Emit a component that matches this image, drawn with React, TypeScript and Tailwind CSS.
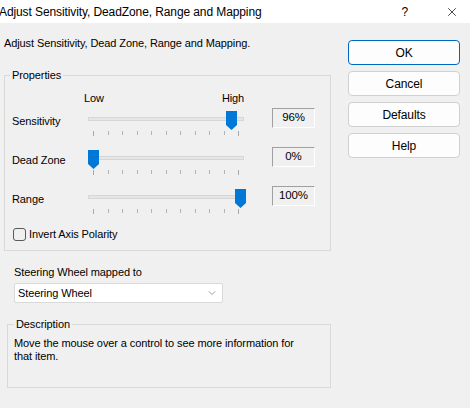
import { ChevronDown, X } from "lucide-react";

type SliderRowProps = {
	label: string;
	value: string;
	thumbLeft: number;
};

const TICKS = [0, 1, 2, 3, 4, 5, 6, 7, 8, 9, 10];

function Thumb() {
	return (
		<svg width="11" height="19" viewBox="0 0 11 19">
			<polygon points="0,0 11,0 11,14 5.5,19 0,14" fill="#0078d7" />
		</svg>
	);
}

function SliderRow({ label, value, thumbLeft }: SliderRowProps) {
	return (
		<div className="flex h-[39px] items-start">
			<div className="w-[83px] pl-[7px] mt-[6px] leading-[15px]">{label}</div>
			<div className="relative w-[156px] h-[39px]">
				<div className="mt-[9px] h-[4px] w-full border border-[#d6d6d6] bg-[#e6e6e6]" />
				<div className="mt-[10px] flex justify-between px-[5px]">
					{TICKS.map(t => (
						<div
							key={t}
							className={
								t === 0 || t === 10
									? "w-px h-[5px] bg-[#a8a8a8]"
									: "w-px h-[4px] bg-[#b4b4b4]"
							}
						/>
					))}
				</div>
				<div className="absolute top-[3px]" style={{ left: thumbLeft }}>
					<Thumb />
				</div>
			</div>
			<div className="ml-[28px] w-[43px] h-[20px] flex items-center justify-center text-[11.5px] border-t border-l border-[#a0a0a0] border-b-white border-r-white border-b border-r">
				{value}
			</div>
		</div>
	);
}

function DialogButton({ label, primary }: { label: string; primary?: boolean }) {
	return (
		<button
			className={
				primary
					? "w-[112px] h-[25px] rounded-[4px] bg-[#fdfdfd] border border-[#0067c0] text-[12px] leading-none"
					: "w-[112px] h-[25px] rounded-[4px] bg-[#fdfdfd] border border-[#d0d0d0] text-[12px] leading-none"
			}
		>
			{label}
		</button>
	);
}

export default function App() {
	return (
		<div className="w-[470px] h-[408px] overflow-hidden bg-[#f0f0f0] text-black text-[11px] tracking-[-0.1px] font-['Segoe_UI','Liberation_Sans',sans-serif]">
			{/* title bar */}
			<div className="h-[23px] bg-white flex items-center">
				<span className="-ml-[1px] text-[12px]">
					Adjust Sensitivity, DeadZone, Range and Mapping
				</span>
				<span className="ml-auto mr-[37px] text-[12px]">?</span>
				<X size={14} strokeWidth={1.2} className="mr-[11px]" />
			</div>

			<div className="flex">
				{/* left column */}
				<div className="w-[336px]">
					<p className="pl-[4px] pt-[13px] leading-[15px]">
						Adjust Sensitivity, Dead Zone, Range and Mapping.
					</p>

					<fieldset className="ml-[4px] mt-[17px] w-[327px] border border-[#d9d9d9] pb-[8px]">
						<legend className="ml-[5px] px-[2px] leading-[14px]">Properties</legend>
						<div className="flex pt-[9px] leading-[15px]">
							<span className="ml-[79px]">Low</span>
							<span className="ml-[118px]">High</span>
						</div>
						<div className="mt-[2px]">
							<SliderRow label="Sensitivity" value="96%" thumbLeft={138} />
							<SliderRow label="Dead Zone" value="0%" thumbLeft={0} />
							<SliderRow label="Range" value="100%" thumbLeft={147} />
						</div>
						<label className="mt-[2px] flex items-center pl-[8px] leading-[15px]">
							<span className="w-[13px] h-[13px] rounded-[3px] border border-[#5a5a5a]" />
							<span className="ml-[3px]">Invert Axis Polarity</span>
						</label>
					</fieldset>

					<div className="mt-[14px] pl-[14px] leading-[15px]">Steering Wheel mapped to</div>
					<div className="ml-[14px] mt-[3px] w-[209px] h-[20px] bg-white border border-[#d9d9d9] rounded-[2px] flex items-center pl-[3px] pr-[4px]">
						<span>Steering Wheel</span>
						<ChevronDown size={12} strokeWidth={1.2} className="ml-auto text-[#606060]" />
					</div>

					<fieldset className="ml-[7px] mt-[14px] w-[324px] h-[71px] border border-[#d9d9d9]">
						<legend className="ml-[6px] px-[2px] leading-[14px]">Description</legend>
						<p className="pl-[6px] pt-[6px] leading-[12.5px]">
							Move the mouse over a control to see more information for
							<br />
							that item.
						</p>
					</fieldset>
				</div>

				{/* right column */}
				<div className="ml-[12px] pt-[17px] flex flex-col gap-[6px]">
					<DialogButton label="OK" primary />
					<DialogButton label="Cancel" />
					<DialogButton label="Defaults" />
					<DialogButton label="Help" />
				</div>
			</div>
		</div>
	);
}
